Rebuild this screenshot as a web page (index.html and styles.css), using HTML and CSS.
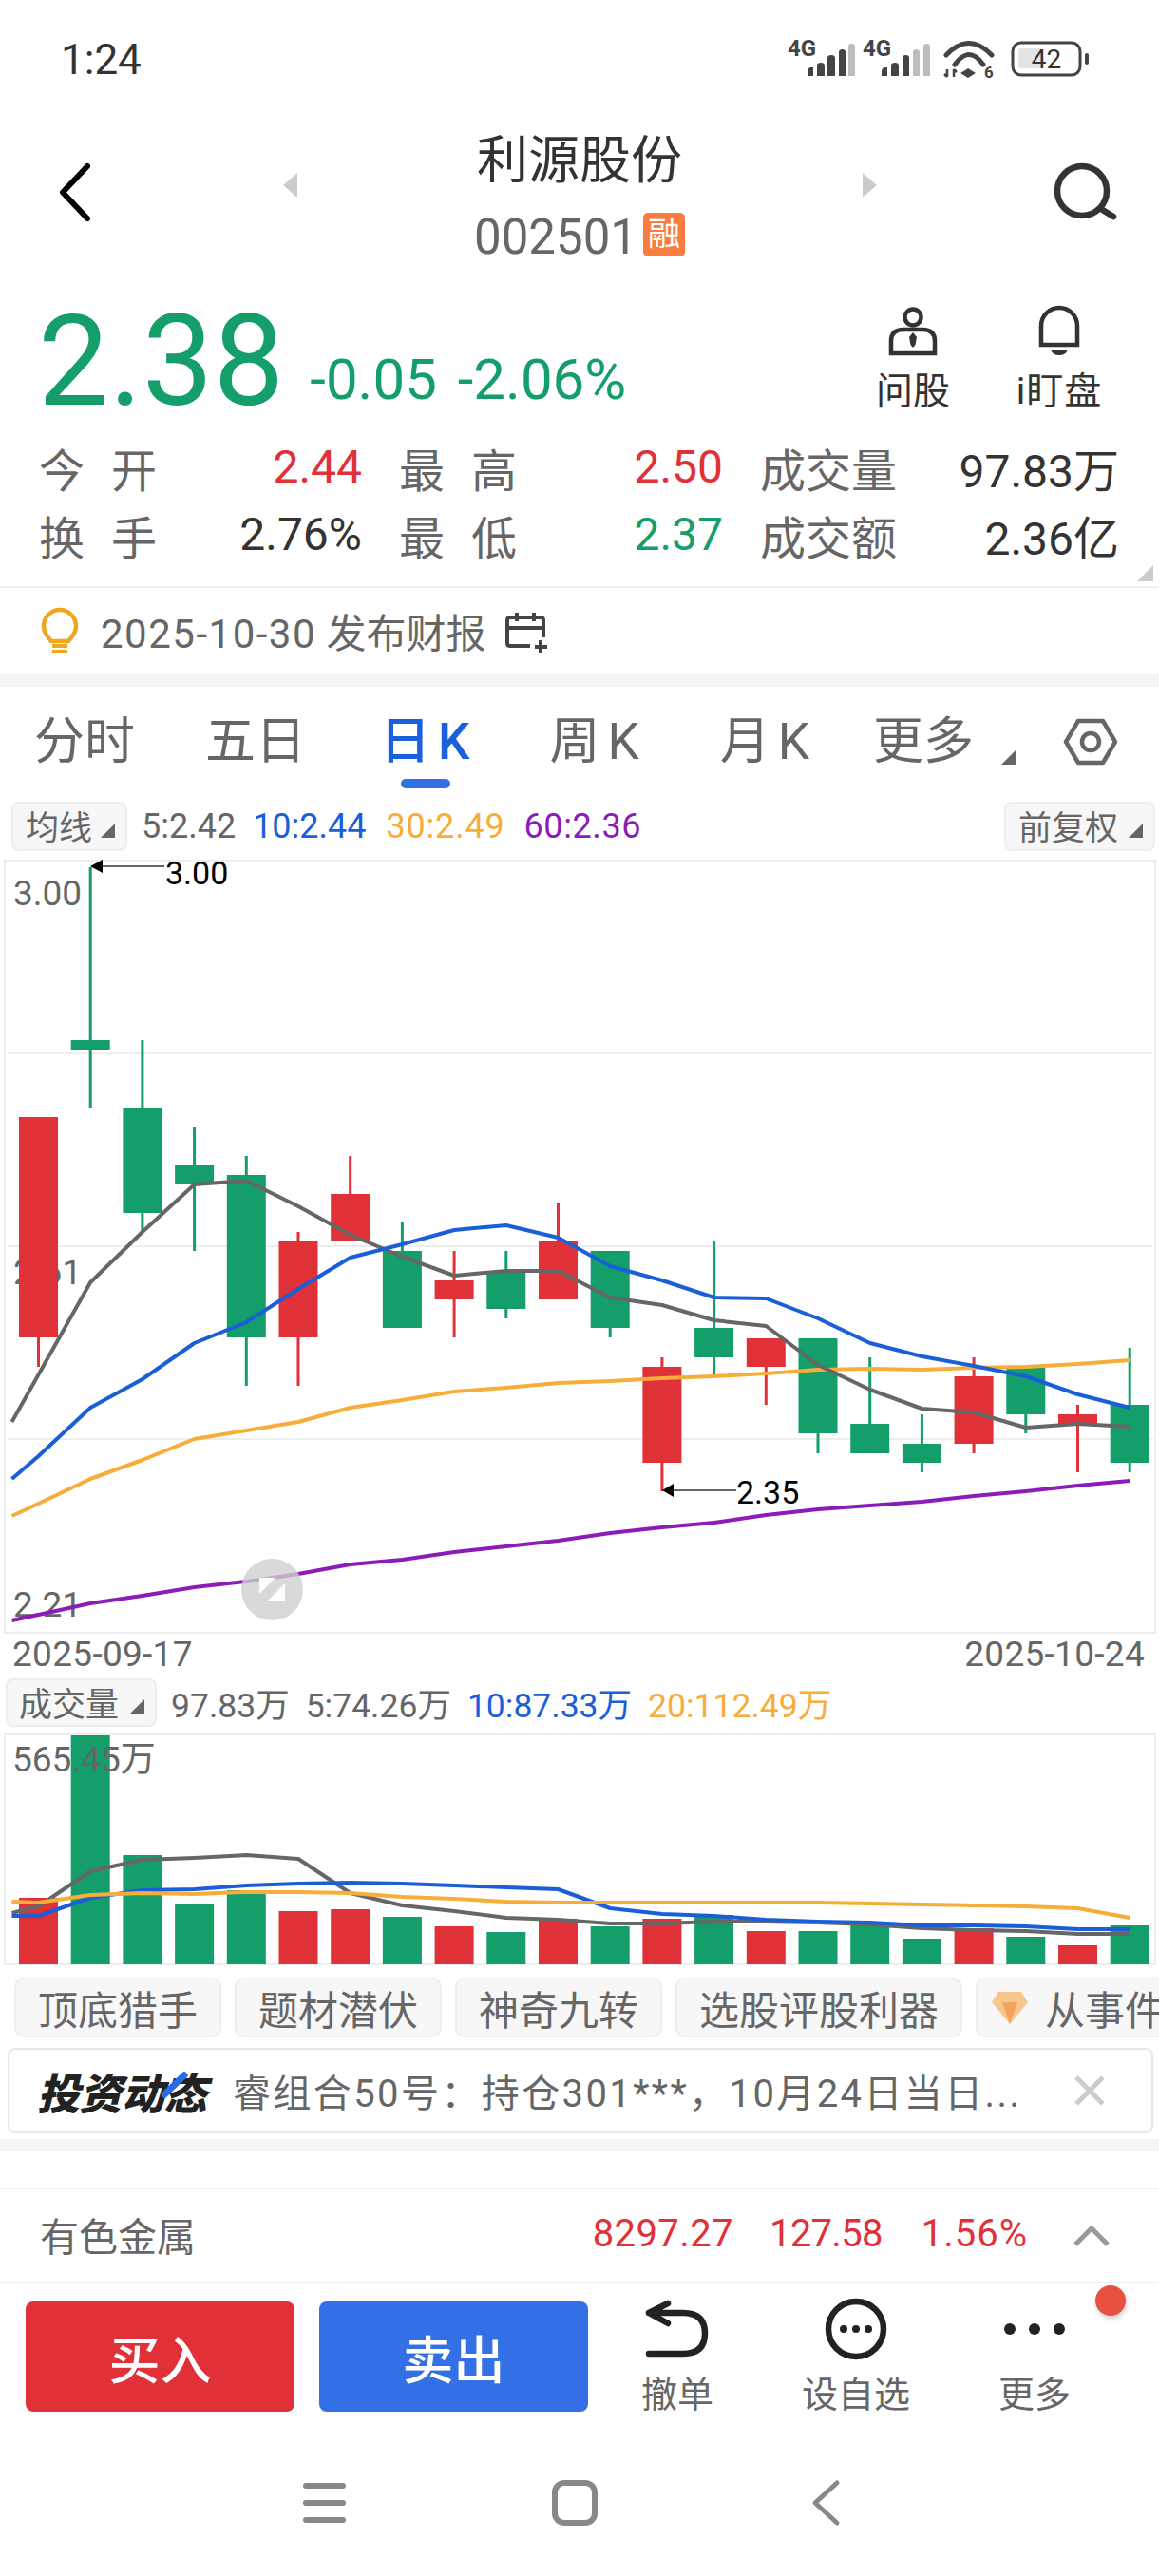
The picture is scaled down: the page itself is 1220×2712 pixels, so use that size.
FILE: index.html
```html
<!DOCTYPE html>
<html lang="zh-CN">
<head>
<meta charset="utf-8">
<title>利源股份</title>
<link rel="stylesheet" href="styles.css">
</head>
<body>
<div class="page">

  <div class="status">
    <span class="time">1:24</span>
    <div class="status-icons">
      <svg class="signal" viewBox="832 43 70 40" width="70" height="40">
        <text class="net" x="831" y="60">4G</text>
        <path class="bar" d="M852 81v-5q0-3 3-4h3v9zM862 81V70q0-3 4-3t4 3v11zM873 81V62q0-3 4-3t4 3v19zM885 81V56q0-3 3.500-3t3.500 3v25z"/>
        <path class="bar-dim" d="M895 81V50q0-3 3.500-3t3.500 3v31z"/>
      </svg>
      <svg class="signal" viewBox="911 43 70 40" width="70" height="40">
        <text class="net" x="910" y="60">4G</text>
        <path class="bar" d="M930 81v-5q0-3 3-4h3v9zM940 81V70q0-3 4-3t4 3v11zM952 81V62q0-3 3.500-3t3.500 3v19z"/>
        <path class="bar-dim" d="M963 81V56q0-3 3.500-3t3.500 3v25zM974 81V50q0-3 3.500-3t3.500 3v31z"/>
      </svg>
      <svg class="wifi" viewBox="995 43 56 41" width="56" height="41">
        <path class="wifi-arc" d="M998 59Q1022 34 1046 59M1007 69Q1022 48 1037 69"/>
        <path class="bar" d="M1021 73l8 5-8 5-8-5z"/>
        <path class="wifi-tick" d="M999 74v8M996 79l3 3M1006 74v8M1006 74l3 3"/>
        <text class="wifi-six" x="1038" y="83">6</text>
      </svg>
      <svg class="battery" viewBox="1066 44 84 38" width="84" height="38">
        <rect class="batt-level" x="1074" y="52" width="25" height="21" rx="3"/>
        <rect class="batt-case" x="1068" y="46" width="71" height="34" rx="9"/>
        <rect class="bar" x="1144" y="57" width="4" height="12" rx="2"/>
        <text class="batt-num" x="1103.500" y="72.500">42</text>
      </svg>
    </div>
  </div>

  <header class="head">
    <svg class="back" viewBox="0 0 33 61" width="33" height="61"><path d="M30 3 4 30.500 30 58"/></svg>
    <span class="nav-tri left"></span>
    <div class="stock">
      <div class="stock-name">利源股份</div>
      <div class="stock-code"><span>002501</span><b class="tag">融</b></div>
    </div>
    <span class="nav-tri right"></span>
    <svg class="search" viewBox="0 0 65 58" width="65" height="58"><circle cx="30" cy="28" r="26"/><path d="M50 47 63 55"/></svg>
  </header>

  <section class="quote">
    <div class="price">2.38</div>
    <div class="change">-0.05 -2.06%</div>
    <div class="quote-tools">
      <div class="tool">
        <svg viewBox="0 0 54 54" width="54" height="54" class="tool-icon">
          <circle cx="27" cy="12" r="8.500"/>
          <path d="M4 50V37q0-12 13-12h20q13 0 13 12v13z"/>
          <path class="fill" d="M27 28l4 5-1.500 8-2.500 3-2.500-3-1.500-8z"/>
        </svg>
        <span>问股</span>
      </div>
      <div class="tool tool-bell">
        <svg viewBox="0 0 54 54" width="54" height="54" class="tool-icon">
          <path d="M8 41V21a19 19 0 0 1 38 0v20z"/>
          <path class="fill" d="M18 46h18q-2 6-9 6t-9-6z"/>
        </svg>
        <span>i盯盘</span>
      </div>
    </div>
  </section>

  <section class="stats">
    <div class="cell c1"><span class="lbl wide">今开</span><span class="val red">2.44</span></div>
    <div class="cell c2"><span class="lbl wide">最高</span><span class="val red">2.50</span></div>
    <div class="cell c3"><span class="lbl">成交量</span><span class="val">97.83万</span></div>
    <div class="cell c1"><span class="lbl wide">换手</span><span class="val">2.76%</span></div>
    <div class="cell c2"><span class="lbl wide">最低</span><span class="val green">2.37</span></div>
    <div class="cell c3"><span class="lbl">成交额</span><span class="val">2.36亿</span></div>
    <span class="corner"></span>
  </section>

  <section class="finance">
    <svg class="bulb" viewBox="0 0 40 48" width="40" height="48">
      <path d="M11 34C6 28 3 24 3 18a17 17 0 0 1 34 0c0 6-3 10-8 16z"/>
      <path class="base" d="M12 39h16M12 45h16"/>
    </svg>
    <span class="fin-text"><span class="fin-date">2025-10-30</span> 发布财报</span>
    <svg class="cal" viewBox="0 0 45 44" width="45" height="44">
      <path d="M26 36H5q-3 0-3-3V9q0-3 3-3h32q3 0 3 3v18M2 17h38M12 1v9M30 1v9"/>
      <path d="M37 30v13M31 37h13"/>
    </svg>
  </section>

  <div class="band"></div>

  <nav class="tabs">
    <span class="tab t1">分时</span>
    <span class="tab t2">五日</span>
    <span class="tab t3 on">日K</span>
    <span class="tab t4">周K</span>
    <span class="tab t5">月K</span>
    <span class="tab t6">更多</span>
    <span class="tri tab-tri"></span>
    <svg class="hex" viewBox="0 0 56 50" width="56" height="50"><path d="M15 3h26l13 22-13 22H15L2 25z"/><circle cx="28" cy="25" r="9"/></svg>
  </nav>

  <div class="ma-row">
    <div class="pick">均线<span class="tri"></span></div>
    <span class="ma gray">5:2.42</span>
    <span class="ma blue">10:2.44</span>
    <span class="ma orange">30:2.49</span>
    <span class="ma purple">60:2.36</span>
    <div class="pick pick-right">前复权<span class="tri"></span></div>
  </div>

  <svg class="chart" viewBox="0 906 1220 814" width="1220" height="814">
    <rect class="frame" x="5" y="906" width="1211" height="813"/>
    <path class="grid" d="M8 1109H1214M8 1312H1214M8 1515H1214"/>
    <text class="axis" x="14" y="953">3.00</text>
    <text class="axis" x="14" y="1352">2.61</text>
    <text class="axis" x="14" y="1702">2.21</text>

    <path class="wick-red" d="M40.500 1408V1439M314 1297V1459M368.700 1217V1257M478.100 1317V1408M587.500 1267V1307M696.900 1429V1570M806.300 1409V1479M1025.100 1429V1530M1134.500 1479V1550"/>
    <path class="wick-green" d="M95.200 913V1166M149.900 1095V1297M204.600 1186V1317M259.300 1217V1459M423.400 1287V1317M532.800 1317V1388M642.200 1398V1408M751.600 1307V1449M861 1509V1530M915.700 1429V1499M970.400 1489V1550M1079.800 1489V1509M1189.200 1419V1550"/>
    <path class="body-red" d="M20 1176h41v232H20zM293.500 1307h41v101h-41zM348.200 1257h41v50h-41zM457.600 1348h41v20h-41zM567 1307h41v61h-41zM676.400 1439h41v101h-41zM785.800 1409h41v30h-41zM1004.600 1449h41v71h-41zM1114 1489h41v10h-41z"/>
    <path class="body-green" d="M74.700 1095h41v10h-41zM129.400 1166h41v111h-41zM184.100 1227h41v20h-41zM238.800 1237h41v171h-41zM402.900 1317h41v81h-41zM512.300 1338h41v40h-41zM621.700 1317h41v81h-41zM731.100 1398h41v31h-41zM840.500 1409h41v100h-41zM895.200 1499h41v31h-41zM949.900 1520h41v20h-41zM1059.300 1439h41v50h-41zM1168.700 1479h41v61h-41z"/>

    <polyline class="line l-purple" points="12.500,1706 40.500,1700 95.200,1688 149.900,1680 204.600,1671 259.300,1665 314,1657 368.700,1647 423.400,1642 478.100,1634 532.800,1628 587.500,1622 642.200,1614 696.900,1608 751.600,1603 806.300,1595 861,1589 915.700,1585 970.400,1581 1025.100,1575 1079.800,1570 1134.500,1564 1189.200,1559"/>
    <polyline class="line l-orange" points="12.500,1596 40.500,1583 95.200,1557 149.900,1537 204.600,1515 259.300,1506 314,1497 368.700,1482 423.400,1474 478.100,1465 532.800,1461 587.500,1456 642.200,1454 696.900,1451 751.600,1449 806.300,1446 861,1442 915.700,1441 970.400,1442 1025.100,1440 1079.800,1439 1134.500,1436 1189.200,1432"/>
    <polyline class="line l-gray" points="12.500,1497 95.200,1350 149.900,1297 204.600,1247 259.300,1243 314,1270 368.700,1300 423.400,1323 478.100,1343 532.800,1338 587.500,1338 642.200,1366 696.900,1374 751.600,1390 806.300,1396 861,1437 915.700,1463 970.400,1483 1025.100,1487 1079.800,1503 1134.500,1499 1189.200,1502"/>
    <polyline class="line l-blue" points="12.500,1557 40.500,1533 95.200,1482 149.900,1452 204.600,1414 259.300,1392 314,1357 368.700,1324 423.400,1310 478.100,1295 532.800,1290 587.500,1303 642.200,1333 696.900,1348 751.600,1366 806.300,1367 861,1388 915.700,1414 970.400,1428 1025.100,1438 1079.800,1449 1134.500,1468 1189.200,1482"/>

    <path class="pointer" d="M108 912H173M709 1569H775"/>
    <path class="arrow" d="M95 912l13-7v14zM697 1569l12-7v14z"/>
    <text class="note" x="174" y="931">3.00</text>
    <text class="note" x="775" y="1583">2.35</text>

    <circle class="zoom-btn" cx="286.500" cy="1673.500" r="32.500"/>
    <path class="zoom-mark" d="M273 1661h17l-17 17zM300 1667v19h-19z"/>
  </svg>

  <div class="dates"><span>2025-09-17</span><span>2025-10-24</span></div>

  <div class="vol-row">
    <div class="pick pick-vol">成交量<span class="tri"></span></div>
    <span class="vol gray">97.83万</span>
    <span class="vol gray">5:74.26万</span>
    <span class="vol blue">10:87.33万</span>
    <span class="vol orange">20:112.49万</span>
  </div>

  <svg class="volume" viewBox="0 1826 1220 243" width="1220" height="243">
    <rect class="frame" x="5" y="1826" width="1211" height="242"/>
    <path class="body-red" d="M20 1998h41v70H20zM293.500 2012h41v56h-41zM348.200 2010h41v58h-41zM457.600 2028h41v40h-41zM567 2020h41v48h-41zM676.400 2020h41v48h-41zM785.800 2033h41v35h-41zM1004.600 2030h41v38h-41zM1114 2048h41v20h-41z"/>
    <path class="body-green" d="M74.700 1827h41v241h-41zM129.400 1953h41v115h-41zM184.100 2005h41v63h-41zM238.800 1990h41v78h-41zM402.900 2018h41v50h-41zM512.300 2034h41v34h-41zM621.700 2028h41v40h-41zM731.100 2016h41v52h-41zM840.500 2033h41v35h-41zM895.200 2026h41v42h-41zM949.900 2041h41v27h-41zM1059.300 2039h41v29h-41zM1168.700 2027h41v41h-41z"/>
    <polyline class="line l-gray" points="12.500,2014 40.500,2007 95.200,1970 149.900,1958 204.600,1956 259.300,1953 314,1957 368.700,1993 423.400,2006 478.100,2012 532.800,2019 587.500,2021 642.200,2025 696.900,2025 751.600,2023 806.300,2023 861,2024 915.700,2026 970.400,2030 1025.100,2032 1079.800,2033 1134.500,2036 1189.200,2036"/>
    <polyline class="line l-blue" points="12.500,2017 40.500,2017 95.200,1998 149.900,1990 204.600,1989 259.300,1985 314,1983 368.700,1982 423.400,1983 478.100,1985 532.800,1987 587.500,1989 642.200,2009 696.900,2015 751.600,2017 806.300,2021 861,2023 915.700,2024 970.400,2027 1025.100,2027 1079.800,2028 1134.500,2031 1189.200,2031"/>
    <polyline class="line l-orange" points="12.500,2002 40.500,2003 95.200,1995 149.900,1993 204.600,1994 259.300,1992 314,1992 368.700,1993 423.400,1997 478.100,1999 532.800,2002 587.500,2003 642.200,2003 696.900,2003 751.600,2003 806.300,2003 861,2003 915.700,2004 970.400,2005 1025.100,2006 1079.800,2007 1134.500,2009 1189.200,2019"/>
    <text class="axis" x="13" y="1865">565.45万</text>
  </svg>

  <div class="chips">
    <span class="chip">顶底猎手</span>
    <span class="chip">题材潜伏</span>
    <span class="chip">神奇九转</span>
    <span class="chip">选股评股利器</span>
    <span class="chip chip-gem">
      <svg viewBox="0 0 40 35" width="40" height="35"><path class="gem-a" d="M8 1h24l7 11-19 23L1 12z"/><path class="gem-b" d="M12 12h16l-8 23z"/></svg>
      从事件
    </span>
  </div>

  <div class="news">
    <span class="news-logo">投资动态</span>
    <span class="news-text">睿组合50号：持仓301***，10月24日当日...</span>
    <svg class="news-x" viewBox="0 0 34 32" width="34" height="32"><path d="M3 2l28 28M31 2 3 30"/></svg>
  </div>

  <div class="band band-lower"></div>

  <div class="sector">
    <span class="sector-name">有色金属</span>
    <span class="sector-val sv1">8297.27</span>
    <span class="sector-val sv2">127.58</span>
    <span class="sector-val sv3">1.56%</span>
    <svg class="sector-up" viewBox="0 0 38 22" width="38" height="22"><path d="M2 20 19 3l17 17"/></svg>
  </div>

  <footer class="trade">
    <button class="btn buy">买入</button>
    <button class="btn sell">卖出</button>
    <div class="action">
      <svg viewBox="0 0 68 68" width="68" height="68"><path d="M20 7 0 17l20 11M0 17h36q23 0 23 21.500T36 60H0" transform="translate(4 0)"/></svg>
      <span>撤单</span>
    </div>
    <div class="action">
      <svg viewBox="0 0 68 68" width="68" height="68"><circle cx="34" cy="34" r="29"/><circle class="dot" cx="21" cy="34" r="4"/><circle class="dot" cx="34" cy="34" r="4"/><circle class="dot" cx="47" cy="34" r="4"/></svg>
      <span>设自选</span>
    </div>
    <div class="action">
      <svg viewBox="0 0 68 68" width="68" height="68"><circle class="dot" cx="8" cy="34" r="6"/><circle class="dot" cx="34" cy="34" r="6"/><circle class="dot" cx="60" cy="34" r="6"/></svg>
      <span>更多</span>
    </div>
    <span class="badge"></span>
  </footer>

  <div class="sysnav">
    <svg class="sys-menu" viewBox="0 0 45 42" width="45" height="42"><path d="M3 3h39M3 21h39M3 39h39"/></svg>
    <svg class="sys-home" viewBox="0 0 48 48" width="48" height="48"><rect x="3" y="3" width="42" height="42" rx="10"/></svg>
    <svg class="sys-back" viewBox="0 0 30 48" width="30" height="48"><path d="M27 3 4 24l23 21"/></svg>
  </div>

</div>
</body>
</html>
```

FILE: styles.css
```css
* { box-sizing: border-box; margin: 0; padding: 0; }
html, body { background: #fff; }
body { width: 1220px; height: 2712px; overflow: hidden; font-family: Roboto, "Noto Sans CJK SC", sans-serif; color: #666; }
.page { width: 1220px; height: 2712px; overflow: hidden; }
svg { display: block; flex: none; overflow: visible; }

/* status bar */
.status { height: 124px; display: flex; align-items: center; justify-content: space-between; padding: 0 72px 0 64px; }
.time { font-size: 44px; color: #333; margin-top: 2px; }
.status-icons { display: flex; align-items: center; }
.signal + .signal { margin-left: 9px; }
.wifi { margin-left: 14px; }
.battery { margin-left: 15px; }
.net { font: 700 24px Roboto, sans-serif; fill: #444; }
.bar { fill: #444; }
.bar-dim { fill: #bdbdbd; }
.wifi-arc { fill: none; stroke: #444; stroke-width: 5; stroke-linecap: round; }
.wifi-tick { fill: none; stroke: #444; stroke-width: 2.500; }
.wifi-six { font: 700 17px Roboto, sans-serif; fill: #444; }
.batt-case { fill: none; stroke: #444; stroke-width: 3; }
.batt-level { fill: #e4e4e4; }
.batt-num { font: 400 28px Roboto, sans-serif; fill: #333; text-anchor: middle; }

/* header */
.head { height: 170px; display: flex; align-items: center; padding-left: 62px; }
.back { margin-top: -14px; }
.back path { fill: none; stroke: #000; stroke-width: 6; stroke-linecap: round; stroke-linejoin: round; }
.nav-tri { width: 0; height: 0; border-top: 13px solid transparent; border-bottom: 13px solid transparent; margin-top: -28px; }
.nav-tri.left { border-right: 15px solid #ccc; margin-left: 203px; }
.nav-tri.right { border-left: 15px solid #ccc; }
.stock { width: 222px; margin: 0 187px 0 186px; text-align: center; padding-top: 4px; }
.stock-name { font-size: 54px; line-height: 76px; color: #333; }
.stock-code { display: flex; align-items: center; height: 82px; font-size: 51px; color: #666; }
.tag { width: 47px; height: 46px; margin: -4px 0 0 6px; background: #fa7d40; color: #fff; border-radius: 5px; font-size: 34px; font-weight: 400; line-height: 44px; text-align: center; }
.search { margin-left: 186px; margin-top: -14px; }
.search circle, .search path { fill: none; stroke: #333; stroke-width: 6.500; stroke-linecap: round; }

/* quote */
.quote { height: 162px; display: flex; align-items: flex-start; padding-left: 40px; position: relative; }
.price { font-size: 133px; line-height: 130px; color: #139e6a; margin-top: 22px; }
.change { font-size: 60px; line-height: 70px; word-spacing: 7px; color: #139e6a; margin: 71px 0 0 27px; white-space: nowrap; }
.quote-tools { display: flex; margin-left: auto; margin-right: 60px; margin-top: 28px; gap: 65px; }
.tool { width: 88px; display: flex; flex-direction: column; align-items: center; font-size: 39px; line-height: 44px; color: #333; white-space: nowrap; }
.tool-bell { width: 90px; letter-spacing: 1px; }
.tool-icon circle, .tool-icon path { fill: none; stroke: #333; stroke-width: 4.500; }
.tool-icon .fill { fill: #333; stroke: none; }
.tool span { margin-top: 14px; }

/* stats */
.stats { position: relative; display: grid; grid-template-columns: 338px 339px 376px; column-gap: 41px; grid-auto-rows: 71px; padding-left: 41px; height: 163px; border-bottom: 2px solid #f0f0f0; }
.cell { display: flex; align-items: center; justify-content: space-between; }
.lbl { font-size: 48px; color: #666; white-space: nowrap; }
.lbl.wide { width: 124px; text-align: justify; text-align-last: justify; }
.val { font-size: 48px; color: #333; white-space: nowrap; }
.c1 .val { margin-right: -2px; }
.c2 .val { margin-right: -2px; }
.c3 .val { margin-right: -2px; }
.red { color: #e03138; }
.green { color: #139e6a; }
.corner { position: absolute; right: 6px; bottom: 5px; width: 0; height: 0; border-left: 17px solid transparent; border-bottom: 17px solid #ccc; }

/* finance */
.finance { height: 91px; display: flex; align-items: center; padding-left: 43px; }
.bulb path { fill: none; stroke: #efa81e; stroke-width: 4.500; }
.bulb .base { stroke-width: 4; }
.fin-text { font-size: 42px; color: #666; margin: -3px 0 0 23px; white-space: nowrap; }
.fin-date { letter-spacing: 1.500px; }
.cal { margin: 2px 0 0 21px; }
.cal path { fill: none; stroke: #444; stroke-width: 4; }
.band { height: 13px; background: #f5f5f5; }

/* tabs */
.tabs { height: 110px; display: flex; align-items: flex-start; padding: 0 0 0 36px; position: relative; }
.tab { font-size: 53px; line-height: 116px; white-space: nowrap; color: #666; }
.t2 { margin-left: 74px; }
.t3, .t4, .t5 { letter-spacing: 8px; }
.t3 { margin-left: 78px; color: #1a5fdc; font-weight: 500; position: relative; }
.t3::after { content: ""; position: absolute; left: 22px; bottom: 9px; width: 52px; height: 10px; border-radius: 5px; background: #3370e5; }
.t4 { margin-left: 76px; }
.t5 { margin-left: 77px; }
.t6 { margin-left: 59px; }
.tab-tri { margin: 67px 0 0 29px; }
.hex { margin: 33px 0 0 51px; }
.hex path, .hex circle { fill: none; stroke: #666; stroke-width: 4.500; stroke-linejoin: round; }
.tri { display: inline-block; width: 0; height: 0; border-left: 15px solid transparent; border-bottom: 15px solid #666; }

/* indicator rows */
.ma-row { height: 52px; margin-top: 11px; display: flex; align-items: center; gap: 18px; padding: 0 4px 0 12px; }
.pick { height: 52px; width: 122px; display: flex; align-items: center; padding: 0 0 3px 13px; background: #f7f7f7; border: 2px solid #eee; border-radius: 8px; font-size: 35px; color: #666; white-space: nowrap; position: relative; }
.pick .tri { position: absolute; right: 11px; bottom: 12px; }
.pick-right { width: 159px; margin-left: auto; }
.ma { font-size: 36px; white-space: nowrap; }
.ma.gray { margin-left: -3px; }
.ma.orange { margin-left: 3px; letter-spacing: .8px; }
.ma.purple { margin-left: 2px; letter-spacing: .6px; }
.gray { color: #666; }
.blue { color: #1a5fd8; }
.orange { color: #f7ad3a; }
.purple { color: #8b1cb8; }

.chart { margin-top: 10px; }
.frame { fill: none; stroke: #eee; stroke-width: 2; }
.grid { fill: none; stroke: #eee; stroke-width: 2; }
.axis { font: 400 37px Roboto, "Noto Sans CJK SC", sans-serif; fill: #666; }
.wick-red { fill: none; stroke: #e03138; stroke-width: 3; }
.wick-green { fill: none; stroke: #139e6a; stroke-width: 3; }
.body-red { fill: #e03138; }
.body-green { fill: #139e6a; }
.line { fill: none; stroke-width: 4; stroke-linejoin: round; }
.l-gray { stroke: #666; }
.l-blue { stroke: #1a5fd8; }
.l-orange { stroke: #f7ad3a; }
.l-purple { stroke: #8b1cb8; }
.pointer { fill: none; stroke: #666; stroke-width: 2; }
.arrow { fill: #000; }
.note { font: 400 34px Roboto, sans-serif; fill: #000; }
.zoom-btn { fill: #cfcfcf; fill-opacity: .8; }
.zoom-mark { fill: #fff; }

.dates { height: 42px; display: flex; justify-content: space-between; align-items: center; padding: 0 15px 0 13px; font-size: 37px; letter-spacing: .3px; color: #666; }

.vol-row { height: 51px; margin-top: 5px; display: flex; align-items: center; gap: 17px; padding-left: 6px; }
.pick-vol { width: 159px; height: 51px; padding-left: 12px; }
.vol { font-size: 35.500px; white-space: nowrap; }
.vol-row .pick + .vol { margin-left: -2px; }

.volume { margin-top: 8px; }

/* chips */
.chips { height: 63px; margin-top: 13px; display: flex; gap: 14px; padding-left: 15px; white-space: nowrap; }
.chip { flex: none; display: flex; align-items: center; height: 63px; padding: 0 23px; font-size: 42px; color: #666; background: #f7f7f7; border: 2px solid #eee; border-radius: 10px; }
.chip-gem { padding-left: 14px; }
.chip-gem svg { margin-right: 17px; }
.gem-a { fill: #f7c68d; }
.gem-b { fill: #f2a45c; }

/* news */
.news { height: 90px; margin: 11px 6px 0 8px; display: flex; align-items: center; padding-left: 29px; border: 2px solid #e8e8e8; border-radius: 8px; }
.news-logo { position: relative; font-size: 45px; font-weight: 900; font-style: italic; color: #222; white-space: nowrap; letter-spacing: -.5px; }
.news-logo::after { content: ""; position: absolute; right: 30px; top: 8px; width: 7px; height: 36px; background: #2a6bea; border-radius: 3px; transform: rotate(46deg); }
.news-text { font-size: 40px; letter-spacing: 2.400px; color: #666; margin-left: 28px; white-space: nowrap; }
.news-x { margin-left: auto; margin-right: 48px; }
.news-x path { fill: none; stroke: #ccc; stroke-width: 5; }

.band-lower { margin-top: 6px; }

/* sector */
.sector { margin-top: 38px; height: 101px; display: flex; align-items: center; padding: 0 52px 4px 42px; border-top: 2px solid #f0f0f0; border-bottom: 2px solid #f0f0f0; gap: 41px; }
.sector-name { font-size: 41px; color: #666; margin-right: auto; }
.sector-val { font-size: 40px; color: #e03138; }
.sv1 { letter-spacing: .4px; margin-right: -3px; }
.sv2 { letter-spacing: -.7px; }
.sv3 { letter-spacing: 1px; }
.sector-up { margin: 4px 0 0 7px; }
.sector-up path { fill: none; stroke: #999; stroke-width: 5; }

/* trade bar */
.trade { height: 158px; display: flex; align-items: flex-start; padding: 14px 0 0 27px; position: relative; }
.btn { width: 283px; height: 116px; margin-top: 5px; border: 0; border-radius: 8px; color: #fff; font: 500 54px Roboto, "Noto Sans CJK SC", sans-serif; }
.buy { background: #e03138; }
.sell { background: #3370e5; margin-left: 26px; }
.action { width: 188px; display: flex; flex-direction: column; align-items: center; font-size: 38px; line-height: 40px; color: #666; white-space: nowrap; }
.action span { margin-top: 15px; }
.action path, .action circle { fill: none; stroke: #222; stroke-width: 6.500; stroke-linecap: round; stroke-linejoin: round; }
.action circle.dot { fill: #222; stroke: none; }
.badge { position: absolute; left: 1153px; top: 2px; width: 32px; height: 32px; border-radius: 50%; background: #e8503f; box-shadow: 1px 3px 5px rgba(0,0,0,.2); }

/* system nav */
.sysnav { height: 146px; display: flex; align-items: center; padding: 0 0 0 319px; }
.sys-menu path { fill: none; stroke: #888; stroke-width: 6; stroke-linecap: round; }
.sys-home { margin-left: 217px; }
.sys-home rect { fill: none; stroke: #888; stroke-width: 6; }
.sys-back { margin-left: 225px; }
.sys-back path { fill: none; stroke: #888; stroke-width: 5; stroke-linecap: round; stroke-linejoin: round; }
```
